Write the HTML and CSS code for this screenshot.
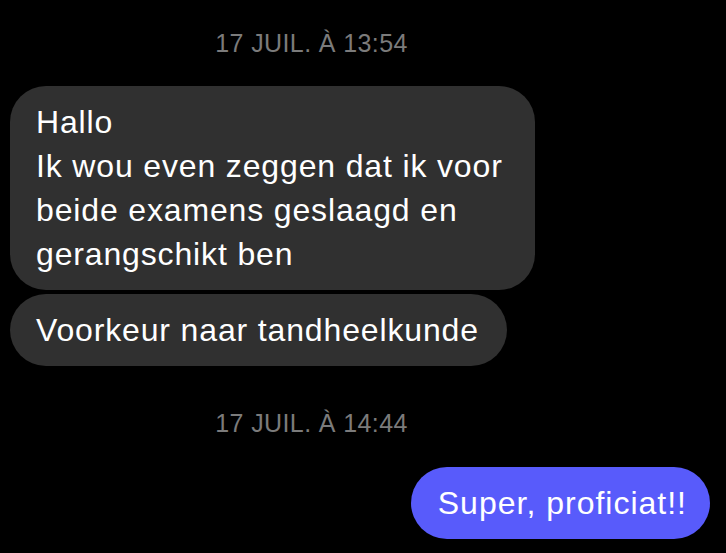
FILE: index.html
```html
<!DOCTYPE html>
<html lang="nl">
<head>
<meta charset="utf-8">
<link rel="stylesheet" href="styles.css">
</head>
<body>
<div class="chat">
  <div class="stamp stamp-first">17 JUIL. À 13:54</div>
  <div class="row in">
    <div class="bubble gray wide">Hallo<br>Ik wou even zeggen dat ik voor<br>beide examens geslaagd en<br>gerangschikt ben</div>
  </div>
  <div class="row in gap-small">
    <div class="bubble gray">Voorkeur naar tandheelkunde</div>
  </div>
  <div class="stamp stamp-second">17 JUIL. À 14:44</div>
  <div class="row out">
    <div class="bubble blue">Super, proficiat!!</div>
  </div>
</div>
</body>
</html>
```
FILE: styles.css
```css
html, body {
  margin: 0;
  padding: 0;
  background: #000;
}
body {
  width: 726px;
  height: 553px;
  overflow: hidden;
  font-family: "Liberation Sans", Arial, sans-serif;
  color: #fff;
}
.chat {
  display: flex;
  flex-direction: column;
  padding: 29px 16px 0 10px;
}
.stamp {
  font-size: 25px;
  line-height: 28px;
  letter-spacing: 0.4px;
  color: #7b7b7b;
  text-align: center;
  padding-right: 97px;
}
.stamp-first { margin-bottom: 29px; }
.stamp-second { margin-top: 43px; margin-bottom: 30px; }
.row { display: flex; }
.row.out { justify-content: flex-end; }
.gap-small { margin-top: 4px; }
.bubble {
  font-size: 32px;
  line-height: 44px;
  letter-spacing: 0.85px;
  padding: 14px 28px 14px 26px;
  border-radius: 36px;
  white-space: nowrap;
}
.wide { padding-right: 32px; }
.gray { background: #303030; }
.blue {
  background: #585bfb;
  letter-spacing: 1px;
  padding-left: 27px;
  padding-right: 23px;
}
```
